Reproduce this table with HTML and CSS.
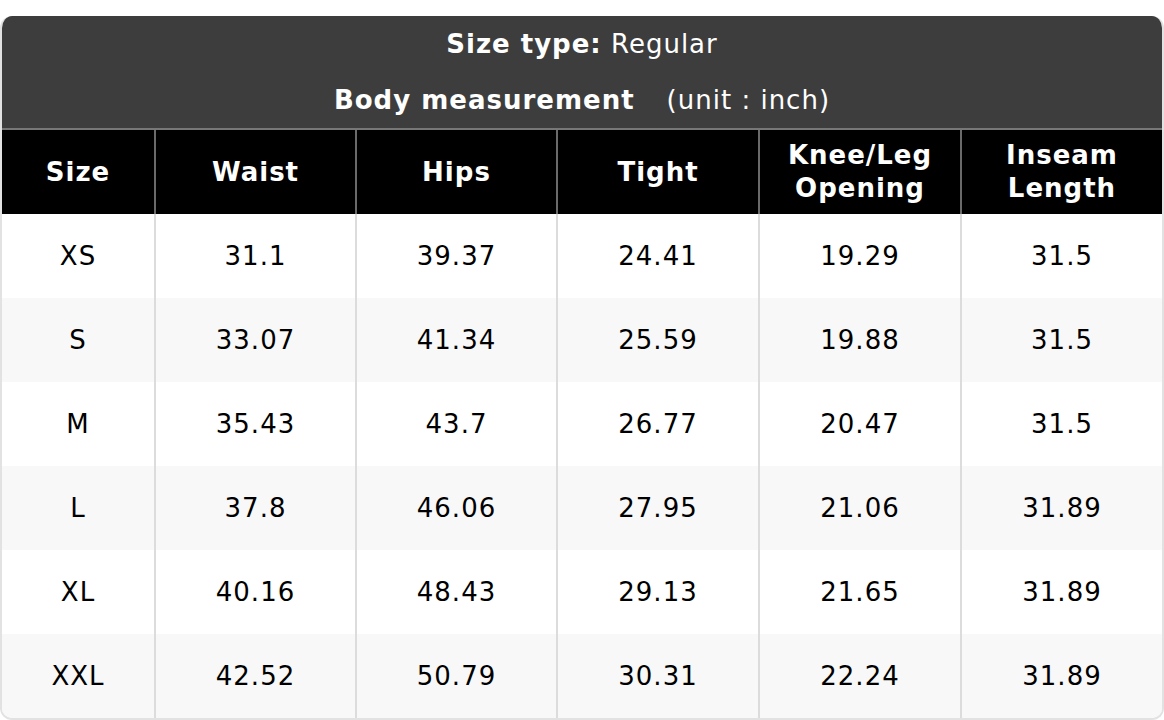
FILE: index.html
```html
<!DOCTYPE html>
<html>
<head>
<meta charset="utf-8">
<link rel="stylesheet" href="styles.css">
</head>
<body>
<div class="chart">
  <div class="title">
    <div class="title-line"><b>Size type:</b> Regular</div>
    <div class="title-line"><b>Body measurement</b><span class="unit">(unit : inch)</span></div>
  </div>
  <table class="sizes">
    <colgroup>
      <col class="c1"><col class="c2"><col class="c3"><col class="c4"><col class="c5"><col class="c6">
    </colgroup>
    <thead>
      <tr><th>Size</th><th>Waist</th><th>Hips</th><th>Tight</th><th>Knee/Leg<br>Opening</th><th>Inseam<br>Length</th></tr>
    </thead>
    <tbody>
      <tr><td>XS</td><td>31.1</td><td>39.37</td><td>24.41</td><td>19.29</td><td>31.5</td></tr>
      <tr><td>S</td><td>33.07</td><td>41.34</td><td>25.59</td><td>19.88</td><td>31.5</td></tr>
      <tr><td>M</td><td>35.43</td><td>43.7</td><td>26.77</td><td>20.47</td><td>31.5</td></tr>
      <tr><td>L</td><td>37.8</td><td>46.06</td><td>27.95</td><td>21.06</td><td>31.89</td></tr>
      <tr><td>XL</td><td>40.16</td><td>48.43</td><td>29.13</td><td>21.65</td><td>31.89</td></tr>
      <tr><td>XXL</td><td>42.52</td><td>50.79</td><td>30.31</td><td>22.24</td><td>31.89</td></tr>
    </tbody>
  </table>
</div>
</body>
</html>
```
FILE: styles.css
```css
html, body {
  margin: 0;
  padding: 0;
  background: #fff;
}
body {
  padding-top: 16px;
  font-family: "DejaVu Sans", Verdana, sans-serif;
  letter-spacing: 1px;
}
.chart {
  width: 1164px;
  border: 2px solid #e2e2e2;
  border-top: none;
  border-radius: 12px;
  overflow: hidden;
  box-sizing: border-box;
}
.title {
  background: #3d3d3d;
  color: #fff;
  border-bottom: 2px solid #777;
  text-align: center;
  font-size: 26px;
}
.title-line {
  height: 56px;
  line-height: 56px;
}
.title-line b {
  font-weight: bold;
}
.unit {
  margin-left: 32px;
}
.sizes {
  width: 100%;
  border-collapse: collapse;
  table-layout: fixed;
  font-size: 26px;
}
.c1 { width: 153px; }
.c2 { width: 201px; }
.c3 { width: 201px; }
.c4 { width: 202px; }
.c5 { width: 202px; }
.c6 { width: auto; }
.sizes th {
  background: #000;
  color: #fff;
  font-weight: bold;
  height: 84px;
  line-height: 33px;
  padding: 0;
  border-left: 2px solid #6a6a6a;
  text-align: center;
}
.sizes td {
  height: 84px;
  padding: 0;
  text-align: center;
  color: #000;
  border-left: 2px solid #dcdcdc;
}
.sizes th:first-child, .sizes td:first-child {
  border-left: none;
}
.sizes tbody tr:nth-child(even) td {
  background: #f8f8f8;
}
.sizes tbody tr:nth-child(odd) td {
  background: #fff;
}
```
